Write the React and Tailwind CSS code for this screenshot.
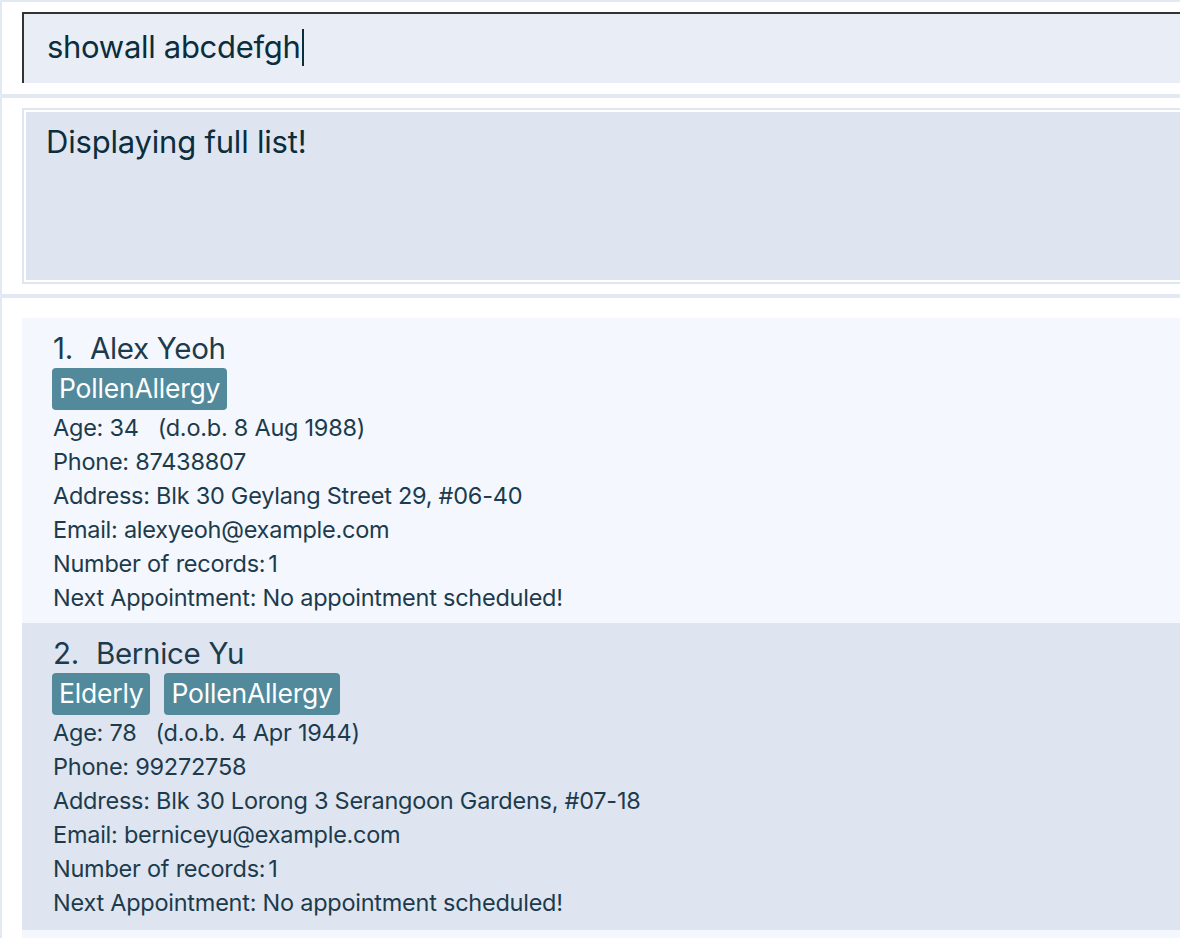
import React from "react";

const font = { fontFamily: "Inter, 'Noto Sans', sans-serif" };

function Person({ idx, name, tags, age, dob, phone, address, email, records, bg, h }) {
  return (
    <div className={`${bg} ${h} pl-[31px] pt-[10px] text-[#1c3b4c]`}>
      <div className="h-[40px] flex items-center text-[29.5px] tracking-[-0.3px]">
        <span>{idx}.</span>
        <span className="ml-[17px]">{name}</span>
      </div>
      <div className="flex gap-[14px] h-[42px] items-stretch -ml-px">
        {tags.map((t) => (
          <span key={t} className="bg-[#528a9c] text-white rounded-[4px] px-[7px] flex items-center text-[26.5px] tracking-[-0.2px]">
            {t}
          </span>
        ))}
      </div>
      <div className="mt-px text-[23.5px] tracking-[-0.25px] leading-[34px]">
        <div>
          Age: {age}
          <span className="ml-[19px]">(d.o.b. {dob})</span>
        </div>
        <div>Phone: {phone}</div>
        <div>Address: {address}</div>
        <div>Email: {email}</div>
        <div>
          Number of records:<span className="ml-[3px]">{records}</span>
        </div>
        <div>Next Appointment: No appointment scheduled!</div>
      </div>
    </div>
  );
}

export default function App() {
  return (
    <div style={font} className="w-[1180px] h-[938px] overflow-hidden bg-white border-l-2 border-t-2 border-[#e3e9f3]">
      <div className="pt-[10px] pl-[20px]">
        <div className="h-[71px] bg-[#e8edf6] border-t-2 border-l-2 border-[#333333] flex items-center pl-[23px] pb-[2px]">
          <span className="text-[31px] text-[#0b2d3c] tracking-[-0.3px]">showall abcdefgh</span>
          <span className="w-[2px] h-[37px] bg-[#0b2d3c] ml-px"></span>
        </div>
      </div>
      <div className="h-[11px]"></div>
      <div className="h-[4px] bg-[#e3e9f3]"></div>
      <div className="pt-[10px] pl-[20px]">
        <div className="border-2 border-r-0 border-[#dfe6f0] p-[2px] pr-0">
          <div className="h-[168px] bg-[#dfe5f0] pl-[20px] pt-[7px]">
            <span className="text-[31px] text-[#0b2d3c] tracking-[-0.2px]">Displaying full list!</span>
          </div>
        </div>
      </div>
      <div className="h-[10px]"></div>
      <div className="h-[4px] bg-[#e3e9f3]"></div>
      <div className="pt-[20px] pl-[20px]">
        <Person
          idx={1}
          name="Alex Yeoh"
          tags={["PollenAllergy"]}
          age={34}
          dob="8 Aug 1988"
          phone="87438807"
          address="Blk 30 Geylang Street 29, #06-40"
          email="alexyeoh@example.com"
          records={1}
          bg="bg-[#f4f7fd]"
          h="h-[305px]"
        />
        <Person
          idx={2}
          name="Bernice Yu"
          tags={["Elderly", "PollenAllergy"]}
          age={78}
          dob="4 Apr 1944"
          phone="99272758"
          address="Blk 30 Lorong 3 Serangoon Gardens, #07-18"
          email="berniceyu@example.com"
          records={1}
          bg="bg-[#dfe5f0]"
          h="h-[307px]"
        />
        <div className="h-[40px] bg-[#f4f7fd]"></div>
      </div>
    </div>
  );
}
